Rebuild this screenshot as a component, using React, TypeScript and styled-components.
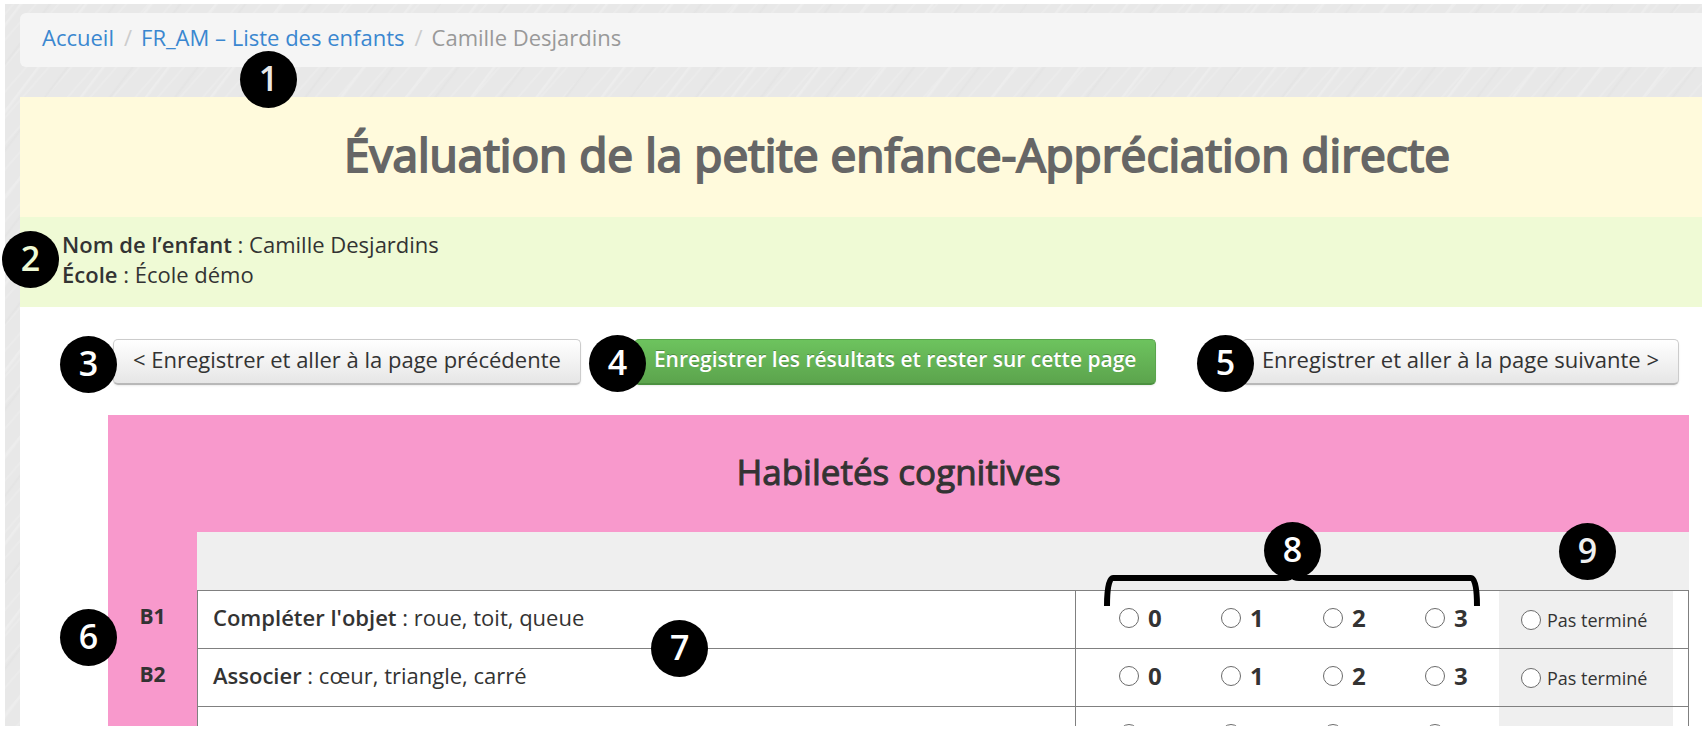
import React from 'react';
import styled, { createGlobalStyle, css } from 'styled-components';

const GlobalStyle = createGlobalStyle`
  *, *::before, *::after { box-sizing: border-box; }
  body {
    margin: 0;
    background: #fff;
    color: #333;
    font: 22px/30px "Open Sans", "Noto Sans", sans-serif;
  }
`;

const Frame = styled.div`
  height: calc(100vh - 19px);
  margin: 4px 0 15px 5px;
  padding: 9px 0 0 15px;
  overflow-x: visible;
  overflow-y: clip;
  background-color: #e8e8e8;
  background-image:
    repeating-linear-gradient(127deg, transparent 0 11px, #ededed 12px 13px, transparent 15px 34px, #e4e4e4 36px, transparent 38px 52px),
    repeating-linear-gradient(131deg, transparent 0 5px, #ebebeb 6px 7px, transparent 8px 17px);
`;

const Breadcrumb = styled.nav`
  position: relative;
  display: flex;
  align-items: center;
  height: 54px;
  margin-bottom: 30px;
  padding: 0 22px 6px;
  border-radius: 6px 0 0 6px;
  background: #f5f5f5;
  color: #999;
`;

const Crumb = styled.a`
  color: #3a87d0;
  text-decoration: none;
`;

const Slash = styled.span`
  margin: 0 9px 0 10px;
  color: #ccc;
`;

const Sheet = styled.main`
  min-height: 100%;
  background: #fff;
`;

const PageTitle = styled.h1`
  margin: 0;
  padding: 0 0 6px 72px;
  background: #fffadc;
  color: #666;
  font-size: 46px;
  font-weight: 400;
  line-height: 114px;
  text-align: center;
  -webkit-text-stroke: 2px #666;
`;

const ChildInfo = styled.section`
  position: relative;
  height: 90px;
  padding: 12px 42px;
  background: #effad5;
`;

const InfoLine = styled.p`
  margin: 0;
`;

const Strong = styled.strong`
  font-weight: 600;
`;

const Actions = styled.div`
  display: flex;
  padding: 32px 23px 30px 93px;
`;

const Action = styled.div<{ $gap?: string }>`
  position: relative;
  margin-left: ${(p) => p.$gap ?? '0'};
`;

const Button = styled.button<{ $primary?: boolean }>`
  height: 46px;
  padding: 0 19px 6px;
  border: 1px solid #ccc;
  border-bottom: 2px solid #b8b8b8;
  border-radius: 5px;
  background: linear-gradient(#fff, #e6e6e6);
  box-shadow: 0 1px 2px rgba(0, 0, 0, 0.08);
  color: #333;
  font: 400 22px/30px "Open Sans", sans-serif;
  white-space: nowrap;
  ${(p) =>
    p.$primary &&
    css`
      border-color: #5aa54d;
      border-bottom-color: #4c9140;
      background: linear-gradient(#6dc35e, #5ca44d);
      color: #fff;
      font-size: 21px;
      font-weight: 600;
      text-shadow: 0 -1px 0 rgba(0, 0, 0, 0.25);
    `}
`;

const Panel = styled.section`
  margin: 0 13px 0 88px;
  background: #f899cc;
`;

const PanelTitle = styled.h2`
  margin: 0;
  padding-bottom: 4px;
  font-size: 35px;
  font-weight: 400;
  line-height: 113px;
  text-align: center;
  -webkit-text-stroke: 1px #333;
`;

const Table = styled.table`
  width: 100%;
  table-layout: fixed;
  border-spacing: 0;
`;

const Column = styled.col<{ $width?: string }>`
  width: ${(p) => p.$width ?? 'auto'};
`;

const HeadCell = styled.th<{ $bare?: boolean }>`
  position: relative;
  height: 58px;
  padding: 0;
  background: ${(p) => (p.$bare ? 'transparent' : '#efefef')};
  font-weight: 400;
`;

const CodeCell = styled.th`
  position: relative;
  height: 58px;
  padding: 0 0 6px;
  font-size: 21px;
  font-weight: 700;
`;

const Cell = styled.td<{ $divided?: boolean; $grey?: boolean; $last?: boolean }>`
  position: relative;
  height: 58px;
  padding: 0;
  border: 0 solid #808080;
  border-top-width: 1px;
  border-left-width: ${(p) => (p.$divided ? '1px' : '0')};
  border-right-width: ${(p) => (p.$last ? '1px' : '0')};
  background: ${(p) => (p.$grey ? '#efefef' : '#fff')};
`;

const Description = styled.div`
  padding: 0 15px 6px;
`;

const Scores = styled.div`
  display: flex;
  padding: 0 0 4px 43px;
`;

const Choice = styled.label<{ $score?: boolean }>`
  display: flex;
  flex: none;
  align-items: center;
  gap: ${(p) => (p.$score ? '9px' : '6px')};
  width: ${(p) => (p.$score ? '102px' : 'auto')};
  min-height: 30px;
  padding-left: ${(p) => (p.$score ? '0' : '22px')};
  font-size: ${(p) => (p.$score ? '24px' : '18px')};
  font-weight: ${(p) => (p.$score ? '700' : '400')};
  white-space: nowrap;
`;

const Radio = styled.input`
  flex: none;
  appearance: none;
  width: 20px;
  height: 20px;
  margin: 0;
  border: 1px solid #6b6b6b;
  border-radius: 50%;
  background: #fff;
  &:checked {
    box-shadow: inset 0 0 0 4px #fff, inset 0 0 0 10px #333;
  }
`;

const Badge = styled.span<{ $left: string; $top: number; $ink?: string }>`
  position: absolute;
  z-index: 2;
  left: ${(p) => p.$left};
  top: ${(p) => p.$top}px;
  width: 57px;
  height: 57px;
  border-radius: 50%;
  background: #000;
  color: ${(p) => p.$ink ?? '#fff'};
  font: 600 34px/55px "Open Sans", sans-serif;
  text-align: center;
`;

const Bracket = styled.svg`
  position: absolute;
  z-index: 1;
  left: 29px;
  top: 43px;
`;

const items = [
  { code: 'B1', title: "Compléter l'objet", detail: 'roue, toit, queue' },
  { code: 'B2', title: 'Associer', detail: 'cœur, triangle, carré' },
  { code: '', title: '', detail: '' },
];

export default function App() {
  return (
    <>
      <GlobalStyle />
      <Frame>
        <Breadcrumb aria-label="Fil d’Ariane">
          <Crumb href="#accueil">Accueil</Crumb>
          <Slash>/</Slash>
          <Crumb href="#liste">FR_AM – Liste des enfants</Crumb>
          <Slash>/</Slash>
          <span>Camille Desjardins</span>
          <Badge $left="220px" $top={38} $ink="#e8e8e8">1</Badge>
        </Breadcrumb>

        <Sheet>
          <PageTitle>Évaluation de la petite enfance-Appréciation directe</PageTitle>
          <ChildInfo>
            <InfoLine><Strong>Nom de l’enfant</Strong> : Camille Desjardins</InfoLine>
            <InfoLine><Strong>École</Strong> : École démo</InfoLine>
            <Badge $left="-18px" $top={14} $ink="#effad5">2</Badge>
          </ChildInfo>

          <Actions>
            <Action>
              <Button type="button">&lt; Enregistrer et aller à la page précédente</Button>
              <Badge $left="-53px" $top={-3}>3</Badge>
            </Action>
            <Action $gap="53px">
              <Button type="button" $primary>Enregistrer les résultats et rester sur cette page</Button>
              <Badge $left="-45px" $top={-4}>4</Badge>
            </Action>
            <Action $gap="auto">
              <Button type="button">Enregistrer et aller à la page suivante &gt;</Button>
              <Badge $left="-45px" $top={-4}>5</Badge>
            </Action>
          </Actions>

          <Panel>
            <PanelTitle>Habiletés cognitives</PanelTitle>
            <Table>
              <colgroup>
                <Column $width="89px" />
                <Column />
                <Column $width="424px" />
                <Column $width="174px" />
                <Column $width="16px" />
              </colgroup>
              <thead>
                <tr>
                  <HeadCell $bare />
                  <HeadCell />
                  <HeadCell>
                    <Bracket width="376" height="31" viewBox="0 0 376 31" aria-hidden="true">
                      <path
                        d="M3 31C3 18 4 3 9 3H181Q186 3 188 0Q190 3 195 3H367C372 3 373 18 373 31"
                        fill="none"
                        stroke="#000"
                        strokeWidth="6"
                      />
                    </Bracket>
                    <Badge $left="189px" $top={-10}>8</Badge>
                  </HeadCell>
                  <HeadCell>
                    <Badge $left="60px" $top={-9} $ink="#efefef">9</Badge>
                  </HeadCell>
                  <HeadCell />
                </tr>
              </thead>
              <tbody>
                {items.map((item, row) => (
                  <tr key={row}>
                    <CodeCell scope="row">
                      {item.code}
                      {row === 0 && <Badge $left="-48px" $top={19}>6</Badge>}
                    </CodeCell>
                    <Cell $divided>
                      {item.title && (
                        <Description>
                          <Strong>{item.title}</Strong> : {item.detail}
                        </Description>
                      )}
                      {row === 0 && <Badge $left="calc(55% - 29px)" $top={29}>7</Badge>}
                    </Cell>
                    <Cell $divided>
                      <Scores>
                        {[0, 1, 2, 3].map((score) => (
                          <Choice key={score} $score>
                            <Radio type="radio" name={`item-${row}`} value={score} aria-label={String(score)} />
                            {item.title && score}
                          </Choice>
                        ))}
                      </Scores>
                    </Cell>
                    <Cell $grey>
                      <Choice>
                        <Radio type="radio" name={`item-${row}`} value="pending" aria-label="Pas terminé" />
                        {item.title && 'Pas terminé'}
                      </Choice>
                    </Cell>
                    <Cell $last />
                  </tr>
                ))}
              </tbody>
            </Table>
          </Panel>
        </Sheet>
      </Frame>
    </>
  );
}
